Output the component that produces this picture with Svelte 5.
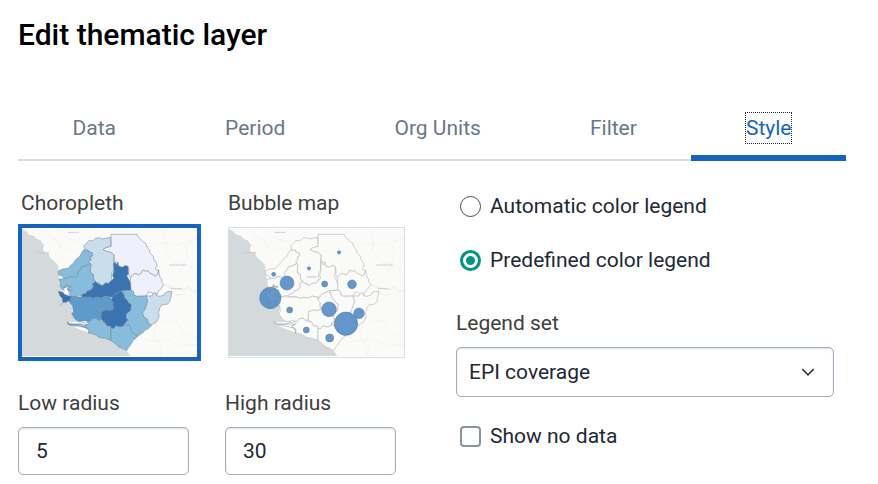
<script>
  const tabs = ['Data', 'Period', 'Org Units', 'Filter', 'Style'];
  let activeTab = $state('Style');
  let mapStyle = $state('choropleth');
  let legend = $state('predefined');
  let lowRadius = $state('5');
  let highRadius = $state('30');
  let legendSet = $state('EPI coverage');
  let showNoData = $state(false);

  const districts = [
    { fill: '#f0f0fc', points: '303,58 381,58 385,67 392,72 400,81 407,84 412,98 419,104 419,113 430,124 431,132 440,145 441,154 436,160 438,165 446,166 443,178 435,184 428,178 420,175 413,167 407,169 399,165 393,175 385,180 378,175 370,178 361,188 356,178 357,165 354,154 345,152 337,157 328,155 322,142 313,140 312,120 302,112 291,110 279,104 288,97 303,94' },
    { fill: '#c9ddec', points: '230,84 237,76 248,78 256,70 268,68 276,72 301,67 303,94 288,97 279,104 291,110 302,112 312,120 310,150 311,165 306,170 303,198 294,206 288,203 277,212 268,204 262,205 256,198 250,190 250,178 240,172 243,148 234,140 243,134 240,127 248,122 246,113 236,110 234,105 224,106 222,92' },
    { fill: '#88bcdd', points: '219,106 234,105 236,111 246,113 248,122 240,127 243,134 236,142 240,146 225,153 215,155 211,164 205,170 203,181 196,188 183,184 173,190 161,191 158,183 146,180 145,168 158,162 175,160 181,152 190,145 198,133 208,126' },
    { fill: '#88bcdd', points: '161,191 173,190 183,184 196,188 203,181 205,170 211,164 215,155 225,153 240,146 243,148 240,172 250,178 250,190 256,200 248,206 250,215 243,225 232,228 228,235 215,243 207,240 200,245 187,246 176,237 185,228 176,230 171,222 183,216 174,217 170,208 166,219 158,218 163,226 156,222 150,212 151,203 147,193' },
    { fill: '#3a74b0', points: '312,165 311,145 316,142 319,150 324,141 325,153 337,157 345,152 354,154 355,178 350,182 357,194 362,205 364,226 345,226 335,228 325,233 316,236 308,247 285,243 275,249 260,247 250,250 240,246 216,246 216,238 228,235 232,228 243,225 250,215 248,206 256,200 265,206 277,212 288,203 294,206 303,198 311,190 308,182' },
    { fill: '#f0f0fc', points: '361,188 370,178 378,175 385,180 393,175 399,165 407,169 413,167 420,175 428,178 435,184 443,178 446,166 450,188 455,192 455,201 462,208 452,222 446,228 440,241 432,240 425,232 415,231 408,243 380,244 372,240 370,230 363,226 362,205' },
    { fill: '#3a74b0', points: '145,229 158,231 163,238 175,242 188,245 180,252 186,263 176,258 168,262 158,262 157,250 150,243' },
    { fill: '#5d9bcb', points: '188,246 200,245 216,246 240,246 250,250 260,247 275,249 285,243 303,247 303,255 310,262 309,272 312,282 300,287 290,285 275,290 274,310 270,318 262,314 258,309 248,311 240,320 225,317 206,320 196,313 185,296 190,290 188,272 180,264 180,252' },
    { fill: '#3a74b0', points: '308,247 316,236 325,233 335,228 343,240 345,250 352,255 356,263 364,268 362,287 350,296 348,306 354,316 345,325 341,333 330,336 318,332 311,341 303,340 303,335 290,332 284,322 274,315 274,290 290,285 300,287 312,282 309,272 310,262 303,255' },
    { fill: '#88bcdd', points: '338,227 364,226 370,230 372,240 380,244 408,243 413,258 410,268 405,283 398,295 402,306 412,312 415,325 425,330 415,341 405,345 398,354 385,362 375,358 370,355 362,347 362,338 357,328 350,333 345,325 354,316 348,306 350,296 362,287 364,268 356,263 352,255 345,250 343,240' },
    { fill: '#cadeed', points: '408,243 425,243 430,235 437,233 440,242 450,244 462,240 465,234 472,230 485,229 484,240 480,258 472,268 465,268 455,270 450,278 446,292 447,305 440,320 425,330 415,325 412,312 402,306 398,295 405,283 410,268 413,258' },
    { fill: '#88bcdd', points: '172,321 180,326 206,328 225,330 236,328 230,320 240,320 248,311 258,309 262,314 270,318 284,322 290,332 303,335 303,377 285,370 270,368 255,359 236,353 238,345 225,338 205,333 190,333 175,330' },
    { fill: '#88bcdd', points: '303,340 311,341 318,332 330,336 341,333 345,325 350,333 357,328 362,338 362,347 370,355 375,358 385,362 375,372 368,378 362,390 356,397 350,407 337,400 325,395 317,387 303,377' }
  ];

  const bubbles = [
    [366, 112, 5], [276, 160, 5], [170, 178, 6], [210, 204, 21], [323, 207, 9],
    [405, 208, 13], [160, 249, 32], [218, 285, 9], [336, 283, 22], [426, 295, 16],
    [387, 326, 35], [268, 345, 9], [338, 369, 12]
  ];
</script>

{#snippet thematicMap(kind)}
  <svg class="map" viewBox="36 42 525 381" preserveAspectRatio="none" aria-hidden="true">
    <rect x="36" y="42" width="525" height="381" fill="#fafaf8" />
    <path fill="#d4d9dc" d="M36 42 L48 48 58 60 72 62 80 72 92 76 103 92 98 100 104 114 114 113 120 128 133 139 144 150 146 180 150 212 163 226 145 229 157 250 160 262 176 258 190 272 185 296 206 320 172 322 176 331 236 353 303 377 350 407 361 423 H36Z" />
    <g fill="none" stroke="#f0eeed" stroke-width="2">
      <path d="M100 42 L116 62 142 76 150 96 180 108 M155 42 L170 68 214 80 M381 58 L405 46 M412 98 L455 84 500 90 561 70 M455 42 L470 80 464 110 490 138 540 152 561 178 M430 300 L470 320 500 318 515 350 561 372 M440 320 L430 365 455 400 450 423 M385 362 L420 380 470 372 520 392 561 388 M500 180 L520 160 532 120 525 90" />
      <path stroke="#eadcdf" d="M462 208 L480 215 500 222 520 224 532 215 548 230 561 226 M485 229 L500 240 520 238" />
    </g>
    <g fill="none" stroke="#bcc8d0" stroke-width="3" stroke-dasharray="5 1 3 1">
      <path d="M174 52H206M82 113H117M478 150H527M483 221H515" />
    </g>
    {#if kind === 'choropleth'}
      <g stroke="#6f8797" stroke-opacity=".8" stroke-width="2" stroke-linejoin="round">
        {#each districts as d}
          <polygon points={d.points} fill={d.fill} />
        {/each}
      </g>
    {:else}
      <g fill="#fafaf8" stroke="#bbb9ba" stroke-width="2" stroke-linejoin="round">
        {#each districts as d}
          <polygon points={d.points} />
        {/each}
      </g>
      <path d="M270 186H298" stroke="#ccd4d9" stroke-width="4" />
      <g fill="#5189c3" fill-opacity=".88" stroke="#4a6f96" stroke-opacity=".7" stroke-width="2">
        {#each bubbles as [x, y, r]}
          <circle cx={x} cy={y} {r} />
        {/each}
      </g>
    {/if}
    <g fill="none" stroke="#7c8a93" stroke-opacity=".8" stroke-width="2">
      <path d="M150 274 L158 264 M170 320 L178 328 200 328 222 322 232 330 224 336 234 340 236 356 M160 218 L170 214 184 214 M168 208 L174 224 188 226" />
    </g>
  </svg>
{/snippet}

<main>
  <h1>Edit thematic layer</h1>

  <div class="tabs" role="tablist">
    {#each tabs as tab}
      <button
        type="button"
        role="tab"
        class="tab"
        class:active={activeTab === tab}
        aria-selected={activeTab === tab}
        onclick={() => (activeTab = tab)}
      ><span>{tab}</span></button>
    {/each}
  </div>

  <div class="content">
    <section class="left">
      {#each [['choropleth', 'Choropleth'], ['bubble', 'Bubble map']] as [id, name]}
        <button
          type="button"
          class="style-option"
          class:selected={mapStyle === id}
          aria-pressed={mapStyle === id}
          onclick={() => (mapStyle = id)}
        >
          <span class="name">{name}</span>
          <span class="thumb">{@render thematicMap(id)}</span>
        </button>
      {/each}
      <div class="field">
        <label for="low">Low radius</label>
        <input id="low" type="text" inputmode="numeric" bind:value={lowRadius} />
      </div>
      <div class="field">
        <label for="high">High radius</label>
        <input id="high" type="text" inputmode="numeric" bind:value={highRadius} />
      </div>
    </section>

    <section class="right">
      <label class="choice">
        <input type="radio" name="legend" value="automatic" bind:group={legend} />
        Automatic color legend
      </label>
      <label class="choice">
        <input type="radio" name="legend" value="predefined" bind:group={legend} />
        Predefined color legend
      </label>
      <div class="legend-set">
        <label for="set">Legend set</label>
        <div class="select">
          <select id="set" bind:value={legendSet}>
            <option>EPI coverage</option>
          </select>
          <svg class="chevron" viewBox="0 0 14 8" aria-hidden="true">
            <path d="M1.2 1 L7 6.8 12.8 1" fill="none" stroke="#303a46" stroke-width="1.7" />
          </svg>
        </div>
      </div>
      <label class="choice">
        <input type="checkbox" bind:checked={showNoData} />
        Show no data
      </label>
    </section>
  </div>
</main>

<style>
  :global(body) {
    margin: 0;
    background: #fff;
  }

  main {
    padding: 17px 32px 8px 18px;
    font: 400 21px/24px Roboto, sans-serif;
    color: #404040;
  }

  main :is(button, input, select) {
    box-sizing: border-box;
    margin: 0;
    font: inherit;
  }

  h1 {
    margin: 0;
    font-size: 30px;
    line-height: 36px;
    font-weight: 500;
    color: #000;
  }

  .tabs {
    display: flex;
    margin-top: 48px;
    box-shadow: inset 0 -2px #d5dde5;
  }

  .tab {
    flex: 1 1 auto;
    height: 60px;
    padding: 0;
    border: 0;
    border-bottom: 6px solid transparent;
    background: none;
    color: #6c7787;
  }

  .tab span {
    display: inline-block;
    padding: 3px 0;
  }

  .tab.active {
    border-color: #1565c0;
    color: #1565c0;
  }

  .tab.active span {
    outline: 1px dotted #212934;
  }

  .content {
    display: grid;
    grid-template-columns: 23fr 21fr;
    gap: 24px;
    padding-right: 12px;
  }

  .left {
    display: grid;
    grid-template-columns: 1fr 1fr;
    row-gap: 30px;
    padding-top: 30px;
  }

  .style-option {
    display: flex;
    flex-direction: column;
    align-items: flex-start;
    gap: 9px;
    padding: 0;
    border: 0;
    background: none;
    color: inherit;
  }

  .name {
    padding-left: 3px;
  }

  .thumb {
    display: block;
    margin: 3px;
    padding: 1px 0;
    border: 1px solid #d5dde5;
  }

  .selected .thumb {
    margin: 0;
    border: 4px solid #1565c0;
  }

  .map {
    display: block;
    width: 175px;
    height: 127px;
  }

  .field {
    display: flex;
    flex-direction: column;
    gap: 12px;
    padding-right: 36px;
  }

  .field input,
  select {
    width: 100%;
    height: 48px;
    padding: 0 17px;
    border: 1px solid #a0adba;
    border-radius: 5px;
    background: #fff;
    box-shadow: inset 0 1px 2px #d5dde5;
    color: #212934;
  }

  .right {
    display: flex;
    flex-direction: column;
    gap: 30px;
    padding-top: 33px;
  }

  .choice {
    display: flex;
    align-items: center;
    gap: 9px;
    padding-left: 4px;
    color: #212934;
  }

  .choice input {
    appearance: none;
    width: 21px;
    height: 21px;
    border: 2px solid #8a94a3;
    border-radius: 4px;
    background: #fff;
  }

  .choice input[type='radio'] {
    border: 1px solid #404b5a;
    border-radius: 50%;
  }

  .choice input[type='radio']:checked {
    border: 3px solid #00967f;
    background: radial-gradient(circle, #00967f 4px, #fff 5px);
  }

  .choice input[type='checkbox']:checked {
    border-color: #00967f;
    background: #00967f;
  }

  .legend-set {
    display: flex;
    flex-direction: column;
    gap: 12px;
    margin: 9px 0 -3px;
  }

  .select {
    display: grid;
    align-items: center;
  }

  .select > * {
    grid-area: 1 / 1;
  }

  select {
    height: 50px;
    padding: 0 12px;
    appearance: none;
  }

  .chevron {
    width: 14px;
    height: 8px;
    margin-right: 19px;
    justify-self: end;
    pointer-events: none;
  }
</style>
